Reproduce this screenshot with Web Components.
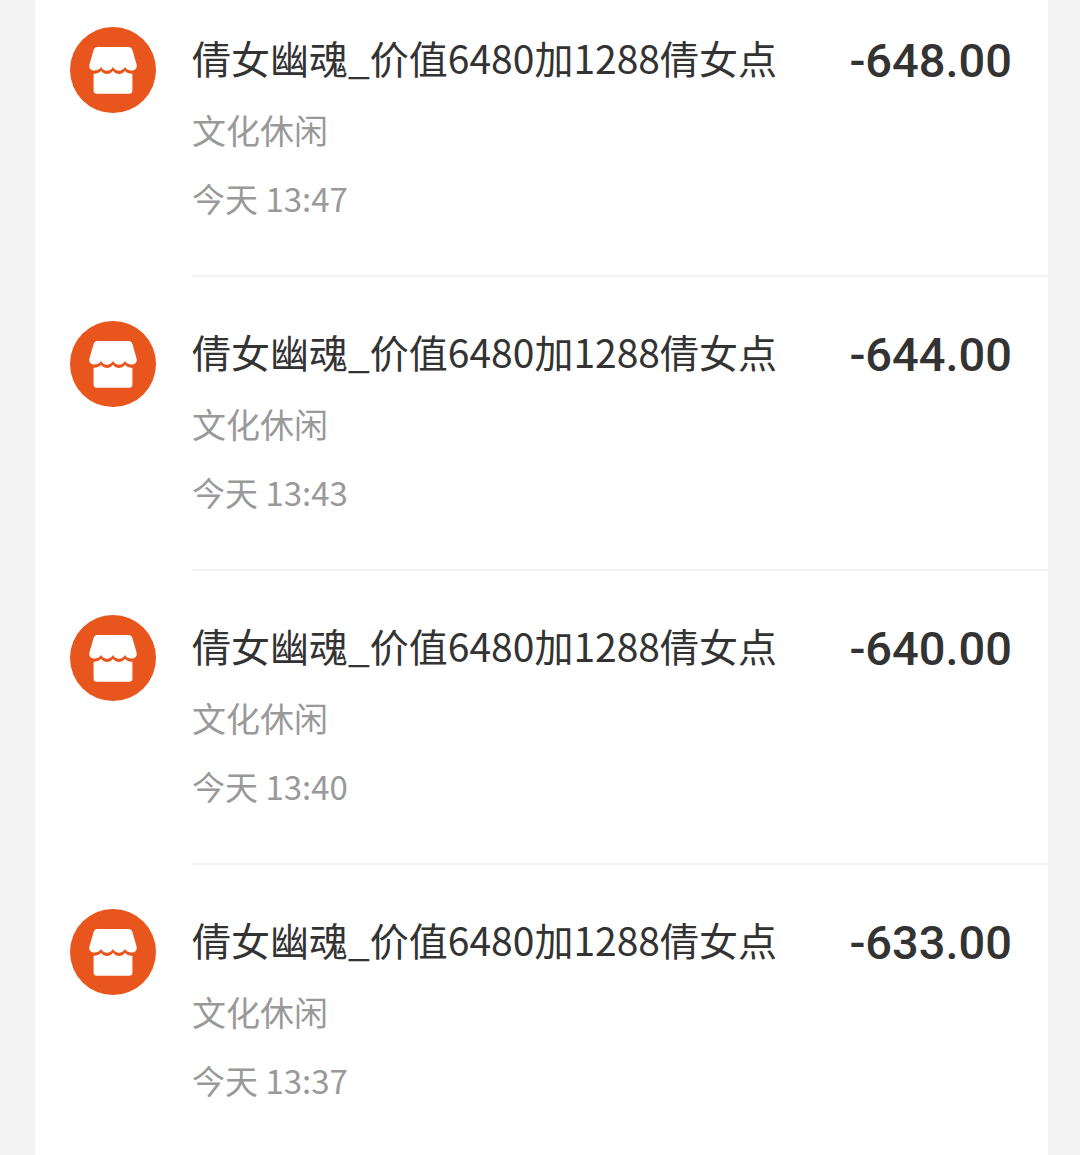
<!DOCTYPE html>
<html lang="zh-CN">
<head>
<meta charset="utf-8">
<meta name="viewport" content="width=device-width, initial-scale=1">
<title>账单</title>
<style>
  body {
    margin: 0;
    background-color: #f4f4f4;
    color: #333;
    font-family: "Noto Sans CJK SC", sans-serif;
  }
</style>
</head>
<body>
<bill-list>
  <bill-item amount="-648.00">
    倩女幽魂_价值6480加1288倩女点
    <span slot="category">文化休闲</span>
    <time slot="time" datetime="13:47">今天 13:47</time>
  </bill-item>
  <bill-item amount="-644.00">
    倩女幽魂_价值6480加1288倩女点
    <span slot="category">文化休闲</span>
    <time slot="time" datetime="13:43">今天 13:43</time>
  </bill-item>
  <bill-item amount="-640.00">
    倩女幽魂_价值6480加1288倩女点
    <span slot="category">文化休闲</span>
    <time slot="time" datetime="13:40">今天 13:40</time>
  </bill-item>
  <bill-item amount="-633.00">
    倩女幽魂_价值6480加1288倩女点
    <span slot="category">文化休闲</span>
    <time slot="time" datetime="13:37">今天 13:37</time>
  </bill-item>
</bill-list>

<script>
class ShopIcon extends HTMLElement {
  constructor() {
    super();
    this.attachShadow({ mode: "open" });
    this.shadowRoot.innerHTML = `
      <style>
        :host {
          display: block;
          flex: none;
          width: 86px;
          height: 86px;
        }
        svg {
          display: block;
        }
      </style>
      <svg width="86" height="86" viewBox="0 0 86 86" aria-hidden="true">
        <circle cx="43" cy="43" r="43" fill="#e8551d"/>
        <path fill="#fff" d="M27.500 20h31q3 0 3.900 3l4.100 14.200c1 3.800-1.200 6.300-4.800 6.300-3 0-5-.7-6.700-3.500-3 5-9 5-12 0-3 5-9 5-12 0-1.700 2.800-3.700 3.500-6.700 3.500-3.600 0-5.800-2.500-4.800-6.300L23.600 23q.9-3 3.900-3z"/>
        <path fill="#fff" d="M23.600 46.800c3 .2 5.200-.6 7.400-3 3.500 4.400 8.500 4.400 12 0 3.500 4.400 8.500 4.400 12 0 2.200 2.400 4.400 3.200 7.400 3V63.500q0 3.300-3.300 3.300H26.900q-3.300 0-3.300-3.300z"/>
      </svg>
    `;
  }
}

class BillItem extends HTMLElement {
  constructor() {
    super();
    this.attachShadow({ mode: "open" });
    this.shadowRoot.innerHTML = `
      <style>
        :host {
          display: flex;
          gap: 36px;
          padding: 44px 0 0 35px;
        }
        :host(:first-of-type) {
          padding-top: 27px;
        }
        .body {
          flex: 1;
          min-width: 0;
          padding-bottom: 42px;
          border-bottom: 2px solid #f4f4f4;
        }
        :host(:last-of-type) .body {
          border-bottom: 0;
        }
        .top {
          display: flex;
          justify-content: space-between;
          gap: 24px;
          padding-right: 36px;
        }
        .title {
          font-size: 39px;
          line-height: 60px;
        }
        .amount {
          font-family: Roboto, sans-serif;
          font-size: 47px;
          font-weight: 500;
          line-height: 68px;
          white-space: nowrap;
        }
        .meta {
          color: #999;
          font-size: 34px;
          line-height: 69px;
        }
        .time {
          font-size: 33px;
        }
      </style>
      <shop-icon></shop-icon>
      <div class="body">
        <div class="top">
          <div class="title"><slot></slot></div>
          <div class="amount"></div>
        </div>
        <div class="meta"><slot name="category"></slot></div>
        <div class="meta time"><slot name="time"></slot></div>
      </div>
    `;
  }
  connectedCallback() {
    this.setAttribute("role", "listitem");
    this.shadowRoot.querySelector(".amount").textContent = this.getAttribute("amount");
  }
}

class BillList extends HTMLElement {
  constructor() {
    super();
    this.attachShadow({ mode: "open" });
    this.shadowRoot.innerHTML = `
      <style>
        :host {
          display: block;
          box-sizing: border-box;
          min-height: 100vh;
          margin: 0 32px 0 35px;
          background-color: #fff;
        }
      </style>
      <slot></slot>
    `;
  }
  connectedCallback() {
    this.setAttribute("role", "list");
  }
}

customElements.define("shop-icon", ShopIcon);
customElements.define("bill-item", BillItem);
customElements.define("bill-list", BillList);
</script>
</body>
</html>
